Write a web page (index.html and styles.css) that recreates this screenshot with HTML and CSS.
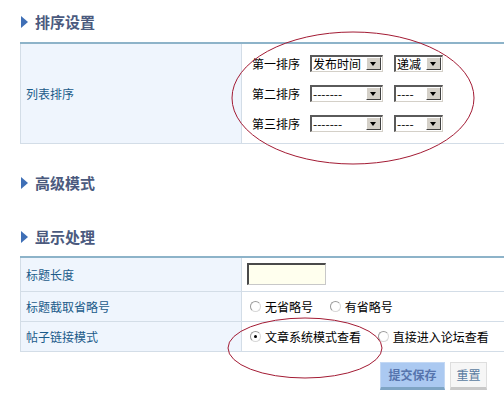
FILE: index.html
```html
<!DOCTYPE html>
<html lang="zh-CN">
<head>
  <meta charset="UTF-8" />
  <title>排序设置</title>
  <link rel="stylesheet" href="styles.css">
</head>
<body>
  <div class="page">
    <h3 class="section-title first"><span class="arrow"></span>排序设置</h3>
    <table class="form-table">
      <tr>
        <td class="label sort-label">列表排序</td>
        <td class="field">
          <div class="sort-row">
            <span class="sort-name">第一排序</span>
            <span class="select wide"><span class="select-text">发布时间</span><span class="select-btn"></span></span>
            <span class="select narrow"><span class="select-text">递减</span><span class="select-btn"></span></span>
          </div>
          <div class="sort-row">
            <span class="sort-name">第二排序</span>
            <span class="select wide"><span class="select-text">-------</span><span class="select-btn"></span></span>
            <span class="select narrow"><span class="select-text">----</span><span class="select-btn"></span></span>
          </div>
          <div class="sort-row">
            <span class="sort-name">第三排序</span>
            <span class="select wide"><span class="select-text">-------</span><span class="select-btn"></span></span>
            <span class="select narrow"><span class="select-text">----</span><span class="select-btn"></span></span>
          </div>
        </td>
      </tr>
    </table>

    <h3 class="section-title second"><span class="arrow"></span>高级模式</h3>

    <h3 class="section-title third"><span class="arrow"></span>显示处理</h3>
    <table class="form-table">
      <tr class="row-tall">
        <td class="label">标题长度</td>
        <td class="field"><input type="text" class="text-input" /></td>
      </tr>
      <tr>
        <td class="label">标题截取省略号</td>
        <td class="field">
          <label class="radio"><span class="dot"></span>无省略号</label>
          <label class="radio"><span class="dot"></span>有省略号</label>
        </td>
      </tr>
      <tr>
        <td class="label">帖子链接模式</td>
        <td class="field">
          <label class="radio"><span class="dot checked"></span>文章系统模式查看</label>
          <label class="radio"><span class="dot"></span>直接进入论坛查看</label>
        </td>
      </tr>
    </table>

    <div class="actions">
      <button class="btn btn-save">提交保存</button>
      <button class="btn btn-reset">重置</button>
    </div>
  </div>

  <!-- hand drawn marks over the screenshot -->
  <svg class="marks" width="504" height="410">
    <ellipse cx="353" cy="98" rx="121" ry="66" />
    <ellipse cx="305" cy="348" rx="77" ry="30" />
  </svg>
</body>
</html>
```

FILE: styles.css
```css
* {
  box-sizing: border-box;
}
body {
  margin: 0;
  background: #fff;
  font-family: "Noto Sans CJK SC", "DejaVu Sans", sans-serif;
  font-size: 12px;
  color: #000;
  overflow: hidden;
  position: relative;
  width: 504px;
  height: 410px;
}
.page {
  padding-left: 20px;
}
.section-title {
  display: flex;
  align-items: center;
  margin: 0;
  height: 16px;
  font-size: 15px;
  font-weight: 700;
  color: #4b5a7e;
  line-height: 16px;
}
.section-title .arrow {
  width: 0;
  height: 0;
  margin: 0 7px 0 1px;
  border-top: 6px solid transparent;
  border-bottom: 6px solid transparent;
  border-left: 7px solid #3f6fb6;
}
.section-title.first {
  margin-top: 14px;
  margin-bottom: 12px;
}
.section-title.second {
  margin-top: 31px;
}
.section-title.third {
  margin-top: 38px;
  margin-bottom: 11px;
}
.form-table {
  width: 490px;
  border-collapse: collapse;
  border-top: 2px solid #8db3c9;
}
.form-table td {
  border: 1px solid #d3dde7;
  border-top: none;
  padding: 0;
  vertical-align: middle;
}
.form-table tr:not(:first-child) td {
  border-top: 1px solid #d3dde7;
}
.label {
  width: 221px;
  background: #eff5fd;
  color: #1b5b8a;
  padding-left: 5px !important;
  height: 30px;
}
.row-tall td {
  height: 34px;
}
.field {
  padding-left: 5px !important;
}

/* sort rows */
.field .sort-row {
  display: flex;
  align-items: center;
  height: 30px;
  padding-left: 5px;
}
.field .sort-row:first-child {
  margin-top: 4px;
}
.field .sort-row:last-child {
  margin-bottom: 5px;
}
.sort-name {
  width: 58px;
}
.select {
  display: inline-flex;
  align-items: center;
  justify-content: space-between;
  height: 17px;
  border-top: 2px solid #5a5a5a;
  border-left: 2px solid #5a5a5a;
  border-right: 1px solid #d4d0c8;
  border-bottom: 1px solid #d4d0c8;
  background: #fff;
  padding-left: 1px;
  padding-right: 1px;
  line-height: 13px;
}
.select.wide {
  width: 73px;
  margin-right: 11px;
}
.select.narrow {
  width: 49px;
}
.select-btn {
  position: relative;
  width: 15px;
  height: 13px;
  background: #d4d0c8;
  border-top: 1px solid #fff;
  border-left: 1px solid #fff;
  border-right: 1px solid #404040;
  border-bottom: 1px solid #404040;
}
.select-btn::after {
  content: "";
  position: absolute;
  left: 3px;
  top: 4px;
  border-left: 3.5px solid transparent;
  border-right: 3.5px solid transparent;
  border-top: 4px solid #000;
}

/* inputs */
.text-input {
  display: block;
  width: 79px;
  height: 22px;
  margin: 0;
  padding: 0 2px;
  background: #ffffee;
  border-top: 2px solid #4a4a4a;
  border-left: 2px solid #4a4a4a;
  border-right: 1px solid #c8c8c8;
  border-bottom: 1px solid #c8c8c8;
}
.radio {
  display: inline-flex;
  align-items: center;
  margin-left: 3px;
  margin-right: 11px;
}
.radio .dot {
  position: relative;
  width: 11px;
  height: 11px;
  margin-right: 4px;
  border-radius: 50%;
  background: #fff;
  border: 1px solid #9a9a9a;
  border-bottom-color: #d8d8d8;
  border-right-color: #d8d8d8;
}
.radio .dot.checked::after {
  content: "";
  position: absolute;
  left: 3px;
  top: 3px;
  width: 3px;
  height: 3px;
  border-radius: 50%;
  background: #000;
}
.radio:last-child {
  margin-right: 0;
}

/* buttons */
.actions {
  display: flex;
  gap: 5px;
  margin-top: 10px;
  padding-left: 360px;
}
.btn {
  height: 28px;
  padding: 0;
  font-family: inherit;
  font-size: 12px;
  cursor: pointer;
}
.btn-save {
  width: 65px;
  background: #abc9f1;
  border: 1px solid #c3d8f4;
  border-bottom: 3px solid #7ea4c4;
  color: #5674ad;
  font-weight: 700;
}
.btn-reset {
  width: 37px;
  background: #f6f6f6;
  border: 1px solid #dedede;
  border-bottom: 3px solid #c9c9c9;
  color: #5a7ba0;
}

.marks {
  position: absolute;
  left: 0;
  top: 0;
  pointer-events: none;
}
.marks ellipse {
  fill: none;
  stroke: #a31b34;
  stroke-width: 1;
}
```
